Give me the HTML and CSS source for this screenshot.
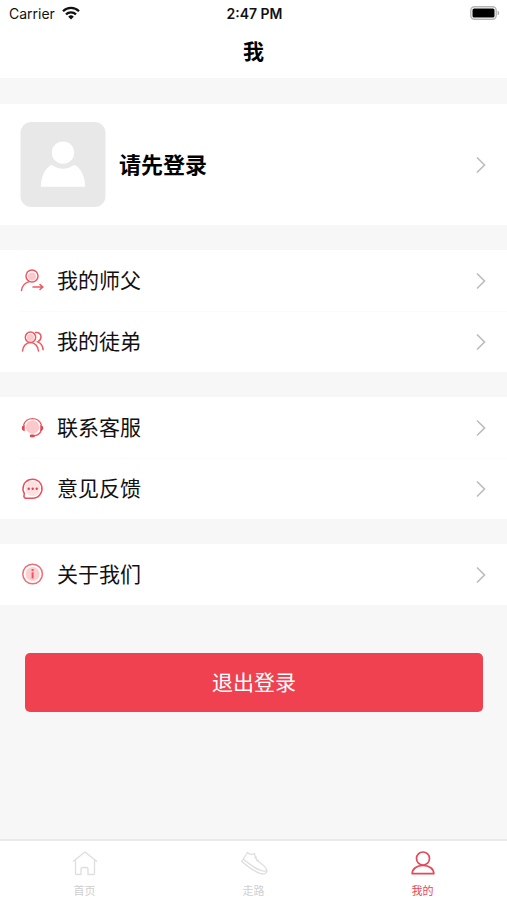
FILE: index.html
```html
<!DOCTYPE html>
<html lang="zh-CN">
<head>
<meta charset="utf-8">
<meta name="viewport" content="width=device-width, initial-scale=1">
<title>我</title>
<link rel="stylesheet" href="styles.css">
</head>
<body>
<svg class="defs" aria-hidden="true">
  <symbol id="chevron" viewBox="0 0 12 18"><path d="M2 1.500l7.500 7.500L2 16.500" fill="none" stroke="#bdbdbd" stroke-width="1.700"/></symbol>
</svg>
<header class="top">
  <div class="status">
    <span class="carrier">Carrier
      <svg class="wifi" viewBox="0 0 18 14" aria-hidden="true"><g fill="none" stroke="#111" stroke-width="2.300"><path d="M1 5.200a11.400 11.400 0 0 1 16 0"/><path d="M4 8.400a7.100 7.100 0 0 1 10 0"/></g><path d="M6.200 10.700a4 4 0 0 1 5.600 0L9 13.600z" fill="#111"/></svg>
    </span>
    <span class="time">2:47 PM</span>
    <svg class="battery" viewBox="0 0 30 14" aria-hidden="true"><rect x=".8" y=".8" width="25.400" height="12.400" rx="3.600" fill="#fff" stroke="#b5b5b5" stroke-width="1.400"/><rect x="2.500" y="2.500" width="22" height="9" rx="1.600" fill="#000"/><path d="M27.600 4.800a2.300 2.300 0 0 1 0 4.400z" fill="#aaa"/></svg>
  </div>
  <h1 class="title">我</h1>
</header>
<main class="content">
  <a class="profile" href="#login">
    <svg class="avatar" viewBox="0 0 86 86" aria-hidden="true"><rect width="86" height="86" rx="11" fill="#e8e8e8"/><circle cx="43" cy="31" r="11.300" fill="#fff"/><path d="M31.500 43.200Q43 51.400 54.500 43.200C61 46.500 65 54 65.500 65.500h-45C21 54 25 46.500 31.500 43.200z" fill="#fff"/></svg>
    <span class="name">请先登录</span>
    <svg class="chevron" aria-hidden="true"><use href="#chevron"/></svg>
  </a>
  <nav class="group">
    <a class="row" href="#master">
      <svg class="icon" viewBox="0 0 24 24" aria-hidden="true"><circle cx="12" cy="7.500" r="4" fill="#fbc9cc"/><g fill="none" stroke="#ec5961" stroke-width="1.500" stroke-linecap="round"><circle cx="12" cy="7" r="6"/><path d="M1.500 21.500c.5-4.600 3.400-7.700 7.600-8.900M13 18h9.500M20 15.500l2.800 2.500-2.800 2.500"/></g></svg>
      <span class="label">我的师父</span>
      <svg class="chevron" aria-hidden="true"><use href="#chevron"/></svg>
    </a>
    <a class="row" href="#apprentice">
      <svg class="icon" viewBox="0 0 24 24" aria-hidden="true"><circle cx="10.500" cy="7.500" r="3.500" fill="#fbc9cc"/><g fill="none" stroke="#ec5961" stroke-width="1.500" stroke-linecap="round"><circle cx="10.500" cy="7.300" r="5.200"/><path d="M2.500 21c.4-4.800 3.500-8.400 8-8.400s7.600 3.600 8 8.400M15.500 2.500c3.200-.6 5.500 1.500 5.500 4.600 0 2.300-1.200 3.900-3.300 4.800 3.100 1 5 4 5.400 7.800"/></g></svg>
      <span class="label">我的徒弟</span>
      <svg class="chevron" aria-hidden="true"><use href="#chevron"/></svg>
    </a>
  </nav>
  <nav class="group">
    <a class="row" href="#service">
      <svg class="icon" viewBox="0 0 24 24" aria-hidden="true"><circle cx="12.500" cy="11" r="6.800" fill="#fbc9cc"/><path d="M3.600 9a9.400 9.400 0 0 1 17.800 0M21.500 13.500c-1 3.800-4 6.100-8.500 6.400" fill="none" stroke="#ec5961" stroke-width="1.300"/><path d="M4.700 9v6.200C2.600 15 1.800 13.800 1.800 12.100S2.600 9.200 4.700 9zM20.300 9v6.200c2.100-.2 2.900-1.400 2.900-3.100S22.400 9.200 20.300 9z" fill="#e8434c"/><rect x="9.800" y="18.600" width="5" height="2.700" rx="1.300" fill="#e8434c"/></svg>
      <span class="label">联系客服</span>
      <svg class="chevron" aria-hidden="true"><use href="#chevron"/></svg>
    </a>
    <a class="row" href="#feedback">
      <svg class="icon" viewBox="0 0 24 24" aria-hidden="true"><circle cx="12.700" cy="11.600" r="7.500" fill="#fde0e2"/><path d="M5.200 21.200l-1.300-1.500.4-3.200A9.500 9.500 0 1 1 12.700 21.200z" fill="none" stroke="#ea505c" stroke-width="1.500" stroke-linejoin="round"/><g fill="#e8434c"><circle cx="8.700" cy="11.700" r="1.200"/><circle cx="12.700" cy="11.700" r="1.200"/><circle cx="16.700" cy="11.700" r="1.200"/></g></svg>
      <span class="label">意见反馈</span>
      <svg class="chevron" aria-hidden="true"><use href="#chevron"/></svg>
    </a>
  </nav>
  <nav class="group">
    <a class="row" href="#about">
      <svg class="icon" viewBox="0 0 24 24" aria-hidden="true"><circle cx="12.600" cy="11" r="7" fill="#fbcfd2"/><circle cx="12.600" cy="11" r="9.800" fill="none" stroke="#ee6e76" stroke-width="1.500"/><path d="M12.600 6v2M12.600 9.200v6.300" stroke="#ea5560" stroke-width="2"/></svg>
      <span class="label">关于我们</span>
      <svg class="chevron" aria-hidden="true"><use href="#chevron"/></svg>
    </a>
  </nav>
  <button class="logout" type="button">退出登录</button>
</main>
<nav class="tabs">
  <a class="tab" href="#home">
    <svg class="tab-icon" viewBox="0 0 28 28" aria-hidden="true"><path d="M2 12.500L14 3l12 9.500M4.500 11v13.500q0 1 1 1H10V20.500a2 2 0 0 1 2-2h3a2 2 0 0 1 2 2v5h5.500q1 0 1-1V11" fill="none" stroke="#dedede" stroke-width="1.300" stroke-linejoin="round"/></svg>
    <span>首页</span>
  </a>
  <a class="tab" href="#walk">
    <svg class="tab-icon" viewBox="0 0 28 28" aria-hidden="true"><path d="M1.700 12.500L7.500 3.500Q10 6.500 14.500 4.500Q15.500 10.500 19 13Q26.500 18 27 22Q26 26 20.500 24.500Q12 21.500 1.700 12.500zM3.300 10Q13 18.500 20 21.200Q24.500 23 27 21.500M14.500 9l2.500-1M16.500 12l2.500-1" fill="none" stroke="#dedede" stroke-width="1.300" stroke-linejoin="round"/></svg>
    <span>走路</span>
  </a>
  <a class="tab active" href="#me" aria-current="page">
    <svg class="tab-icon" viewBox="0 0 28 28" aria-hidden="true"><g fill="none" stroke="#e4495a" stroke-width="1.700" stroke-linejoin="round"><circle cx="14" cy="9.500" r="6.500"/><path d="M3.200 24.700c0-5 4.600-8.200 10.800-8.200s10.800 3.200 10.800 8.200z"/></g></svg>
    <span>我的</span>
  </a>
</nav>
</body>
</html>
```

FILE: styles.css
```css
* {
  box-sizing: border-box;
}

body {
  margin: 0;
  min-height: 100vh;
  display: flex;
  flex-direction: column;
  background: #f7f7f7;
  color: #111;
  font-family: Inter, "Noto Sans CJK SC", sans-serif;
}

a {
  color: inherit;
  text-decoration: none;
}

svg {
  display: block;
  flex: none;
}

.defs {
  position: absolute;
  width: 0;
  height: 0;
}

.top {
  background: #fff;
}

.status {
  display: grid;
  grid-template-columns: 1fr auto 1fr;
  align-items: center;
  height: 26px;
  padding: 0 7px 0 9px;
  font-size: 14px;
}

.carrier {
  display: flex;
  align-items: center;
  gap: 7px;
}

.wifi {
  width: 18px;
  height: 14px;
}

.time {
  font-weight: 600;
}

.battery {
  width: 30px;
  height: 14px;
  justify-self: end;
}

.title {
  margin: 0;
  height: 52px;
  line-height: 52px;
  font-size: 21px;
  font-weight: 700;
  text-align: center;
  color: #000;
}

.content {
  flex: 1;
  display: flex;
  flex-direction: column;
  gap: 25px;
  padding: 26px 0;
}

.profile {
  display: flex;
  align-items: center;
  gap: 13px;
  padding: 18px 20px;
  background: #fff;
}

.avatar {
  width: 86px;
  height: 85px;
}

.name {
  flex: 1;
  padding-bottom: 3px;
  font-size: 22px;
  font-weight: 700;
  color: #000;
}

.chevron {
  width: 12px;
  height: 18px;
}

.group {
  background: #fff;
}

.row {
  display: flex;
  align-items: center;
  gap: 13px;
  height: 61px;
  padding: 0 20px;
}

.row + .row {
  background: linear-gradient(#fbfbfb, #fbfbfb) 20px 0 / 100% 1px no-repeat;
}

.icon {
  width: 24px;
  height: 24px;
}

.label {
  flex: 1;
  padding-bottom: 3px;
  font-size: 21px;
}

.logout {
  height: 59px;
  margin: 23px 24px 0 25px;
  padding: 0 0 3px;
  border: 0;
  border-radius: 5px;
  background: #ef414f;
  color: #fff;
  font-family: inherit;
  font-size: 21px;
}

.tabs {
  display: flex;
  height: 61px;
  border-top: 2px solid #e9e9e9;
  background: #fff;
}

.tab {
  flex: 1;
  display: flex;
  flex-direction: column;
  align-items: center;
  padding-top: 8px;
  gap: 6px;
  color: #cfcfcf;
  font-size: 11px;
  line-height: 16px;
}

.tab-icon {
  width: 28px;
  height: 28px;
}

.active {
  color: #e4495a;
}
```
